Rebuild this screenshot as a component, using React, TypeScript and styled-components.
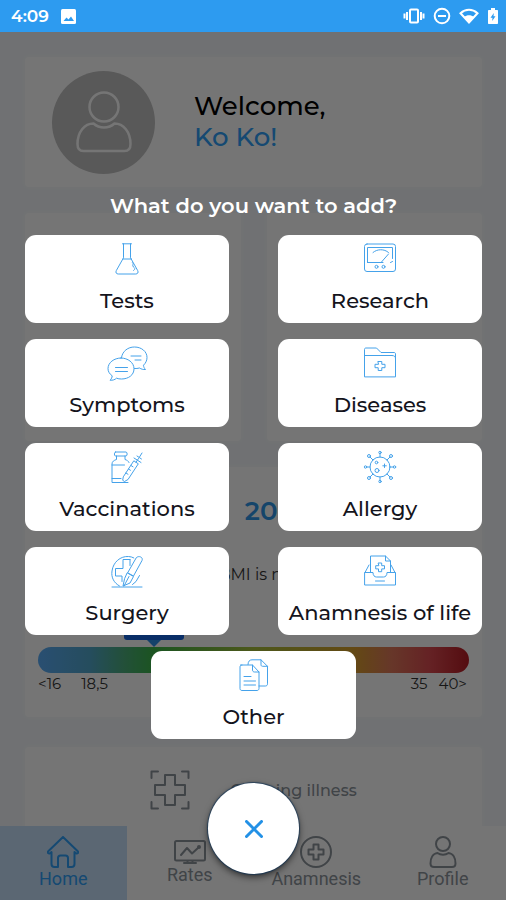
import React from "react";
import styled, { createGlobalStyle, css } from "styled-components";

const blue = "#2f97e8";
const sans = '"Montserrat", "Inter", sans-serif';

const GlobalStyle = createGlobalStyle`
  *, *::before, *::after { box-sizing: border-box; }
  body { margin: 0; background: #f4f7fa; font-family: ${sans}; color: #111; }
  h1, h2, p { margin: 0; }
  button { font: inherit; color: inherit; border: 0; cursor: pointer; }
`;

const Screen = styled.div`
  display: flex;
  flex-direction: column;
  height: 100vh;
  overflow: hidden;
`;

const StatusBar = styled.header`
  display: flex;
  align-items: center;
  justify-content: space-between;
  height: 32px;
  flex: none;
  padding: 0 7px 0 11px;
  background: #2d9bf0;
  color: #fff;
`;

const StatusGroup = styled.div<{ $gap: number }>`
  display: flex;
  align-items: center;
  gap: ${(p) => p.$gap}px;
`;

const Clock = styled.time`
  font-size: 17px;
  font-weight: 600;
  line-height: 24px;
`;

const Stage = styled.div`
  position: relative;
  display: flex;
  flex-direction: column;
  flex: 1;
  min-height: 0;
`;

const Content = styled.main`
  display: flex;
  flex-direction: column;
  gap: 26px;
  flex: 1;
  min-height: 0;
  overflow: hidden;
  padding: 25px 24px 0 25px;
`;

const Card = styled.section`
  flex: none;
  background: #fff;
  border-radius: 4px;
  box-shadow: 0 0 6px rgba(255, 255, 255, 0.7);
`;

const ProfileCard = styled(Card)`
  display: flex;
  align-items: center;
  gap: 39px;
  height: 130px;
  padding: 0 27px;
`;

const Avatar = styled.div`
  display: grid;
  place-items: center;
  width: 103px;
  height: 103px;
  border-radius: 50%;
  background: #c2c2c2;
  color: #fff;
`;

const Greeting = styled.h1<{ $accent?: boolean }>`
  font-size: 26px;
  font-weight: 500;
  line-height: 31px;
  color: ${(p) => (p.$accent ? "#2f9ff8" : "#000")};
`;

const CardPair = styled.div`
  display: grid;
  grid-template-columns: 1fr 1fr;
  gap: 26px;
  flex: none;
`;

const SmallCard = styled(Card)`
  height: 228px;
`;

const BmiCard = styled(Card)`
  padding: 28px 13px 23px;
  margin-bottom: 4px;
`;

const BmiValue = styled.p`
  display: flex;
  align-items: center;
  justify-content: center;
  gap: 20px;
  font-size: 16px;
  line-height: 32px;
`;

const BmiNumber = styled.strong`
  font-size: 26px;
  font-weight: 600;
  color: ${blue};
`;

const BmiNote = styled.p`
  margin-top: 38px;
  text-align: center;
  font-size: 16px;
  line-height: 20px;
  color: #333;
`;

const Marker = styled.div`
  display: flex;
  flex-direction: column;
  align-items: center;
  width: 60px;
  margin: 27px 0 0 20%;
`;

const MarkerLabel = styled.div`
  width: 100%;
  height: 28px;
  border-radius: 3px;
  background: #1565e0;
`;

const MarkerTip = styled.div`
  border: 7px solid transparent;
  border-bottom-width: 0;
  border-top-color: #2a90e8;
`;

const Scale = styled.div`
  height: 26px;
  border-radius: 13px;
  background: linear-gradient(
    90deg,
    #5aacf8 0%,
    #52a8cc 12%,
    #4cae7c 20%,
    #3cb848 27%,
    #a8c03c 50%,
    #d8a02c 73%,
    #e0785a 82%,
    #dc4a50 91%,
    #b81c24 100%
  );
`;

const ScaleLabels = styled.div`
  display: flex;
  justify-content: space-between;
  margin-top: 1px;
  padding-right: 2px;
  font-size: 15px;
  line-height: 20px;
  color: #333;
`;

const LabelGroup = styled.div<{ $gap: number }>`
  display: flex;
  gap: ${(p) => p.$gap}px;
`;

const IllnessCard = styled(Card)`
  display: flex;
  align-items: center;
  justify-content: center;
  gap: 40px;
  height: 86px;
  color: #8d949c;
  font-size: 16px;
  font-weight: 500;
`;

const Nav = styled.nav`
  display: grid;
  grid-template-columns: repeat(4, 1fr);
  flex: none;
  height: 74px;
  background: #fff;
`;

const NavLink = styled.a<{ $active?: boolean }>`
  display: flex;
  flex-direction: column;
  align-items: center;
  justify-content: center;
  font-family: Roboto, sans-serif;
  font-size: 18px;
  line-height: 22px;
  text-decoration: none;
  color: #8d949c;
  ${(p) =>
    p.$active &&
    css`
      color: #2f9ff8;
      background: #c6e1fb;
    `}
`;

const Overlay = styled.div`
  position: absolute;
  inset: 0;
  display: flex;
  flex-direction: column;
  align-items: center;
  padding: 158px 24px 26px 25px;
  background: rgba(0, 0, 0, 0.54);
`;

const Question = styled.h2`
  font-size: 21px;
  font-weight: 600;
  line-height: 32px;
  color: #fff;
`;

const Options = styled.div`
  display: grid;
  grid-template-columns: 1fr 1fr;
  gap: 16px 49px;
  width: 100%;
  margin-top: 13px;
`;

const Option = styled.button<{ $last?: boolean }>`
  display: flex;
  flex-direction: column;
  align-items: center;
  gap: 12px;
  padding: 8px 4px;
  background: #fff;
  border-radius: 11px;
  ${(p) =>
    p.$last &&
    css`
      grid-column: 1 / -1;
      justify-self: center;
      width: calc(50% - 24px);
    `}
`;

const OptionLabel = styled.span`
  font-size: 21px;
  font-weight: 500;
  line-height: 28px;
  white-space: nowrap;
  color: #14141c;
`;

const CloseButton = styled.button`
  display: grid;
  place-items: center;
  width: 91px;
  height: 91px;
  margin-top: auto;
  padding: 0;
  flex: none;
  border-radius: 50%;
  background: #fff;
  color: #2391e6;
  box-shadow: 0 0 1px 1px rgba(16, 50, 84, 0.7), 0 3px 7px rgba(0, 0, 0, 0.6);
`;

const Line = styled.svg<{ $weight?: number }>`
  display: block;
  flex: none;
  fill: none;
  stroke: currentColor;
  stroke-width: ${(p) => p.$weight ?? 1};
  stroke-linecap: round;
  stroke-linejoin: round;
`;

const OptionIcon = styled(Line)`
  width: 36px;
  height: 32px;
  overflow: visible;
  color: #45a2ea;
`;

const icons: Record<string, React.ReactNode> = {
  Tests: (
    <>
      <path d="M13.500 .8h9M14.500 .8v14L7.300 27.600c-1 1.900 0 3.400 2 3.400h17.400c2 0 3-1.500 2-3.400L21.500 14.800V.8M14 16h8.500" />
      <path d="M23.500 19.500c2 1-1 3 1 4.500s1.500 2.500 0 3.500" />
    </>
  ),
  Research: (
    <>
      <rect x="2.500" y="1" width="31" height="27.500" rx="2.500" />
      <path d="M5.500 19.500V4.500h25v11M5.500 19.500h15.500M30.500 18.500l-2 1M19.500 19l7-8M11 9.500c4-3.500 11-4 15.500 0" />
      <circle cx="14.500" cy="23.800" r="1.500" />
      <circle cx="21.500" cy="23.800" r="1.500" />
    </>
  ),
  Symptoms: (
    <>
      <path d="M12.500 10.500C13.500 4 19 0 25.500 0 32.500 0 38 4.500 38 10.500c0 3.200-1.500 5.800-3.500 7.700.1 1.800.8 3 2 4.300-2.300.2-4.300-.4-6-1.500-1.500.5-3.500.6-5 .5" />
      <path d="M12 11c7 0 13 4.600 13 10.800S19.500 32 12.500 32c-1.800 0-3.500-.2-5-.8-1.500 1.500-4 2.300-6.500 2 1.400-1.200 2.100-2.700 2.200-4.400C.6 27-1 24.600-1 21.600-1 15.600 5 11 12 11z" />
      <path d="M22 9h10M26 13h6M6.500 20.500h12M6.500 24.500h12" />
    </>
  ),
  Diseases: (
    <>
      <path d="M2.500 29.500V2.500c0-1 .5-1.500 1.500-1.500h10.500l4.500 4.500h13c1 0 1.500.6 1.500 1.500v22.500zM2.500 8.500H30M30 8.500c2.500 0 3.500 1 3.500 3" />
      <path d="M16.200 14.500h3.600v2.800h3.200v3.400h-3.200v2.800h-3.600v-2.800H13v-3.400h3.200z" />
    </>
  ),
  Vaccinations: (
    <>
      <path d="M6.500 1h10.500c1.500 0 1.500 4 0 4H6.500c-1.500 0-1.500-4 0-4zM7.500 5v3.500c-2.500.8-4.500 2-4.500 4.500v18.500h16M16 5v3.500c2 .6 3.400 1.500 4 3M3 14h12.500M3 27.500h9" />
      <path d="M14.500 25.500L24.800 9.800l4.500 3L19 28.500l-3.500 2-1.500-1zM27 11.300l2.500-3.800M25 7l7 4.500M28 5l4.500 3M30.500 6l2.500-4M17 22l2 1.300M19.500 18l2 1.300M22 14.500l2 1.300" />
    </>
  ),
  Allergy: (
    <>
      <circle cx="18" cy="16" r="10" />
      <path d="M18 6V2.500M18 26v3.500M8 16H4.500M28 16h3.500M11 9L8 6M25 9l3-3M11 23l-3 3M25 23l3 3" />
      <circle cx="18" cy="1.500" r="1.200" />
      <circle cx="18" cy="30.500" r="1.200" />
      <circle cx="3.500" cy="16" r="1.200" />
      <circle cx="32.500" cy="16" r="1.200" />
      <circle cx="7" cy="5" r="1.500" />
      <circle cx="29" cy="5" r="1.500" />
      <circle cx="7" cy="27" r="1.500" />
      <circle cx="29" cy="27" r="1.500" />
      <circle cx="14.500" cy="11.500" r="1.300" />
      <circle cx="15" cy="19.500" r="2" />
      <path d="M22.500 13v3.500M20.800 14.800h3.500" />
    </>
  ),
  Surgery: (
    <>
      <path d="M10.500 31C5 28 2 22.500 3 16 4.200 7 11.500 1 19.500 1.500c2 .1 3.800.6 5.300 1.400M23.500 29.500l3.500-3 3.500-6" />
      <path d="M21 4.500h-7v9H6.500v7.500H13v5.500M21 4.500v6" />
      <path d="M27.500 2.500c2-2.200 7-.5 5.500 3L24.500 21l-5.500-3zM18.500 18l6 3.500L21 28l-7 3 1.500-7zM15 31l5-9.500" />
      <path d="M3 32h30" />
    </>
  ),
  "Anamnesis of life": (
    <>
      <path d="M3 17.500h8c0 3 1.500 4.500 3.500 4.500h7c2 0 3.500-1.500 3.500-4.500h8.500V30H3zM3 17.500l4-7.500M33 17.500l-4-7.500M8.500 17V1h15l5 5v11M23.500 1v5h5M13.500 26h9" />
      <path d="M16.500 8h3.200v2.700h2.800v3.200h-2.800v2.800h-3.200v-2.800h-2.800v-3.200h2.800z" />
    </>
  ),
  Other: (
    <>
      <path d="M4.500 6h12l6.500 7v16.500c0 1.200-.8 2-2 2H6c-1.300 0-2-.8-2-2V8c0-1.200.8-2 2-2" />
      <path d="M16.500 6v5c0 1.200.8 2 2 2H23" />
      <path d="M12 5.500C12 2.500 13.500.8 16 .8h9l6.500 6.500v17.500c0 1.500-.8 2.200-2.200 2.200H23M25 .8v5c0 1 .6 1.500 1.600 1.500h5" />
      <path d="M8 17.500h7M8 22h11.500M8 26h11.500" />
    </>
  ),
};

const options = [
  "Tests",
  "Research",
  "Symptoms",
  "Diseases",
  "Vaccinations",
  "Allergy",
  "Surgery",
  "Anamnesis of life",
  "Other",
];

function StatusIcons() {
  return (
    <StatusGroup $gap={8} aria-hidden="true">
      <svg width="22" height="16" viewBox="0 0 22 16" fill="none" stroke="#fff">
        <rect x="7" y="1.500" width="8" height="13" rx="1" strokeWidth="2" />
        <path d="M4 4v8M18 4v8" strokeWidth="2" />
        <path d="M1.500 5.500v5M20.500 5.500v5" strokeWidth="2" />
      </svg>
      <svg width="18" height="18" viewBox="0 0 18 18" fill="none" stroke="#fff" strokeWidth="2">
        <circle cx="9" cy="9" r="7.300" />
        <path d="M5 9h8" />
      </svg>
      <svg width="20" height="16" viewBox="0 0 20 16">
        <path d="M1.500 5.300C6.500.7 13.500.7 18.500 5.300L10 14.500z" fill="none" stroke="#fff" strokeWidth="2" />
        <path d="M5 9c3-2.200 7-2.200 10 0l-5 6z" fill="#fff" />
      </svg>
      <svg width="12" height="18" viewBox="0 0 12 18">
        <path d="M4 1h4v2h2c.7 0 1 .4 1 1v12c0 .7-.4 1-1 1H2c-.7 0-1-.4-1-1V4c0-.7.4-1 1-1h2z" fill="#fff" />
        <path d="M6.800 6L3.500 10.700h2L5.200 14l3.300-4.700h-2z" fill="#2d9bf0" />
      </svg>
    </StatusGroup>
  );
}

export default function App() {
  return (
    <Screen>
      <GlobalStyle />
      <StatusBar>
        <StatusGroup $gap={12}>
          <Clock>4:09</Clock>
          <svg width="15" height="15" viewBox="0 0 15 15" aria-hidden="true">
            <rect width="15" height="15" rx="1.500" fill="#fff" />
            <path d="M2.500 12l3-3.500 2 2 2.500-3 3 4.500z" fill="#2d9bf0" />
          </svg>
        </StatusGroup>
        <StatusIcons />
      </StatusBar>
      <Stage>
        <Content>
          <ProfileCard>
            <Avatar>
              <Line $weight={2.5} width="56" height="62" viewBox="0 0 56 62" aria-hidden="true">
                <circle cx="28" cy="16" r="14.500" />
                <path d="M17.500 32.500C8.500 32.500 1.500 41 1.500 53c0 4.500 2 7 6 7h41c4 0 6-2.500 6-7 0-12-7-20.500-16-20.500-3 2.700-6.500 4-10.500 4s-7.500-1.300-10.500-4z" />
              </Line>
            </Avatar>
            <div>
              <Greeting>Welcome,</Greeting>
              <Greeting as="p" $accent>
                Ko Ko!
              </Greeting>
            </div>
          </ProfileCard>
          <CardPair>
            <SmallCard />
            <SmallCard />
          </CardPair>
          <BmiCard>
            <BmiValue>
              BMI <BmiNumber>20.37</BmiNumber>
            </BmiValue>
            <BmiNote>Your BMI is normal</BmiNote>
            <Marker>
              <MarkerLabel />
              <MarkerTip />
            </Marker>
            <Scale />
            <ScaleLabels>
              <LabelGroup $gap={20}>
                <span>&lt;16</span>
                <span>18,5</span>
              </LabelGroup>
              <LabelGroup $gap={11}>
                <span>35</span>
                <span>40&gt;</span>
              </LabelGroup>
            </ScaleLabels>
          </BmiCard>
          <IllnessCard>
            <Line $weight={2} width="40" height="40" viewBox="0 0 40 40" aria-hidden="true">
              <path d="M1.500 8V1.500H8M32 1.500h6.500V8M38.500 32v6.500H32M8 38.500H1.500V32" />
              <path d="M15 5h10v10h10v10H25v10H15V25H5V15h10z" />
            </Line>
            <span>Ongoing illness</span>
          </IllnessCard>
        </Content>
        <Nav>
          <NavLink href="#home" $active aria-current="page">
            <Line $weight={2} width="32" height="32" viewBox="0 0 32 32" aria-hidden="true">
              <path d="M16 1L1 15.500c-.8 1 .6 2.800 2 1.700l1.500-1.200v12c0 1.800 1 3 3 3H11v-9c0-1.800 1-2.500 2.500-2.500h5c1.500 0 2.500.7 2.500 2.500v9h3.500c2 0 3-1.200 3-3V16l1.500 1.200c1.400 1.100 2.800-.7 2-1.700z" />
            </Line>
            Home
          </NavLink>
          <NavLink href="#rates">
            <Line $weight={2} width="32" height="24" viewBox="0 0 32 24" aria-hidden="true">
              <rect x="1" y="1" width="30" height="19.500" rx="1.500" />
              <path d="M13.500 21v2M18.500 21v2M10 23h12M7 15l6-7 5 5.500 6.500-6" />
              <circle cx="25" cy="7" r="1" />
            </Line>
            Rates
          </NavLink>
          <NavLink href="#anamnesis">
            <Line $weight={2} width="32" height="32" viewBox="0 0 32 32" aria-hidden="true">
              <circle cx="16" cy="16" r="15" />
              <path d="M13.500 8.500h5v5h5v5h-5v5h-5v-5h-5v-5h5z" />
            </Line>
            Anamnesis
          </NavLink>
          <NavLink href="#profile">
            <Line $weight={2} width="28" height="32" viewBox="0 0 28 32" aria-hidden="true">
              <circle cx="14" cy="8" r="7" />
              <path d="M8.500 17C4 17.500 1.500 22 1.500 27.500c0 2 1 3.500 3.500 3.500h18c2.500 0 3.500-1.500 3.500-3.500C26.500 22 24 17.500 19.500 17c-3 2.200-8 2.200-11 0z" />
            </Line>
            Profile
          </NavLink>
        </Nav>
        <Overlay role="dialog" aria-modal="true" aria-labelledby="add-question">
          <Question id="add-question">What do you want to add?</Question>
          <Options>
            {options.map((name) => (
              <Option key={name} type="button" $last={name === "Other"}>
                <OptionIcon viewBox="0 0 36 32" aria-hidden="true">
                  {icons[name]}
                </OptionIcon>
                <OptionLabel>{name}</OptionLabel>
              </Option>
            ))}
          </Options>
          <CloseButton type="button" aria-label="Close">
            <Line $weight={3} width="18" height="18" viewBox="0 0 18 18" aria-hidden="true">
              <path d="M1.500 1.500l15 15M16.500 1.500l-15 15" />
            </Line>
          </CloseButton>
        </Overlay>
      </Stage>
    </Screen>
  );
}
